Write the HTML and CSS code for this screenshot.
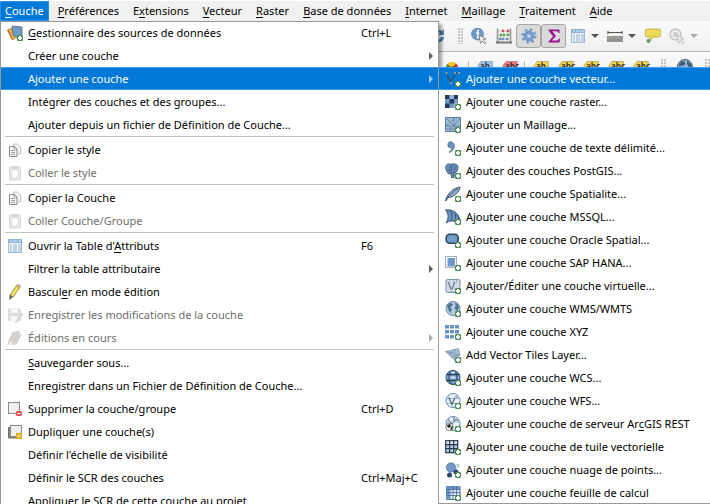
FILE: index.html
```html
<!DOCTYPE html>
<html lang="fr">
<head>
<meta charset="utf-8">
<title>Couche</title>
<link rel="stylesheet" href="styles.css">
</head>
<body>
<svg class="defs" aria-hidden="true">
  <symbol id="plus" viewBox="0 0 6 6"><rect width="6" height="6" rx="1.2" fill="#4f8f57"/><path d="M3 1v4M1 3h4" stroke="#fff" stroke-width="2"/></symbol>
  <symbol id="sources" viewBox="0 0 16 16"><path d="M0 5l7-3 3 9-5 4z" fill="#b5472f"/><path d="M1 5l8-3 2 9-5 4z" fill="#efb13c" stroke="#b0772a" stroke-width=".6"/><path d="M5 1l10 1v9l-5 2-4-3z" fill="#7099c8" stroke="#4d6c90" stroke-width=".8"/><use href="#plus" x="10" y="10" width="6" height="6"/></symbol>
  <symbol id="copy" viewBox="0 0 16 16"><path d="M6.500 2h4l3 3v7h-7z" fill="#f4f4f2" stroke="#b4b4b0" stroke-width=".8"/><path d="M2.500 4.500h5L10 7v7.500H2.500z" fill="#f4f4f2" stroke="#8c8c88" stroke-width="1"/><path d="M7 4.500V7h3M4 8.500h4M4 10.500h4M4 12.500h4" fill="none" stroke="#8c8c88" stroke-width=".8"/></symbol>
  <symbol id="paste" viewBox="0 0 16 16"><rect x="2.500" y="2" width="11" height="13" rx="1" fill="#e6e6e4" stroke="#d6d6d3"/><path d="M5 5h6v5l-2 3H5z" fill="#fff" stroke="#d8d8d5" stroke-width=".6"/><path d="M5.500 1h5v3h-5z" fill="#d3d3d0"/></symbol>
  <symbol id="table" viewBox="0 0 16 16"><rect x="1.500" y="1.500" width="13" height="13" fill="#f2f6fa" stroke="#9dbcdc"/><path d="M1 1h14v4H1z" fill="#8fb5dc"/><path d="M3 7h2M3 9h2M3 11h2M3 13h2M6 7h4M6 9h4M6 11h4M6 13h4M11 7h3M11 9h3M11 11h3M11 13h3" stroke="#8fb0d2" stroke-width="1"/><path d="M3 3h2M6 3h4M11 3h3" stroke="#d5e5f4"/></symbol>
  <symbol id="pencil" viewBox="0 0 16 16"><path d="M9.500 1.500l3.500 2L6 13l-3.500 2.500L3 11z" fill="#e5d14c" stroke="#8f8750" stroke-width=".8"/><path d="M3 10.500l3 2-3.500 3z" fill="#6a6a66"/><path d="M9.500 1l1.500-1 3 2-1 1.500z" fill="#c9c9c3" stroke="#8b8b85" stroke-width=".5"/><path d="M10 4l-5 7.500" stroke="#fff299"/></symbol>
  <symbol id="save" viewBox="0 0 16 16"><path d="M1 1.500h12l1 1V14H1z" fill="#dcdcda"/><path d="M4 2h7v4H4zM3.500 9h7v5h-7z" fill="#f8f8f8"/><path d="M15 6l-6 8-1 2 2-1 6-7z" fill="#e2e2e0" stroke="#cfcfcd" stroke-width=".6"/></symbol>
  <symbol id="edits" viewBox="0 0 16 16"><path d="M6 2l3 0-5 9-3 4 1-5zM10 1l3 1-5 10-3 3 0-4zM13 4l1 1-4 8-3 2 1-4z" fill="#d2cdcb" stroke="#d9d5d3"/></symbol>
  <symbol id="remove" viewBox="0 0 16 16"><rect x="1.500" y="1.500" width="11" height="11" fill="#eeeeec" stroke="#888a85"/><rect x="9" y="10" width="6" height="5" rx="1.500" fill="#ed4c56"/><path d="M10.500 12.500h3" stroke="#fff"/></symbol>
  <symbol id="dup" viewBox="0 0 16 16"><path d="M1.500 3.500h3v9h6v1.500h-9z" fill="#888a85" stroke="#6d6f6b"/><rect x="3.500" y="1.500" width="11" height="11" fill="#eeeeec" stroke="#888a85"/><path d="M9 9h6v6H9z" fill="#d1a91b"/><path d="M10.500 10.500h3v3h-3z" fill="#f3dc72"/></symbol>

  <symbol id="vector" viewBox="0 0 16 16"><path d="M1.500 2l4.500 10 4-10h4" fill="none" stroke="#3b4e5e" stroke-width="1.200"/><g fill="#b9c6cf" stroke="#4a5661" stroke-width=".4"><path d="M.5 1h2v2h-2zM9 1h2v2H9zM13 1h2v2h-2zM5 11h2v2H5z"/></g><use href="#plus" x="10" y="10" width="6" height="6"/></symbol>
  <symbol id="raster" viewBox="0 0 16 16"><path d="M0 1h13v13H0z" fill="#6f9aca"/><path d="M0 1h4.500v4H0zM9 1h4v4H9zM4.500 5H9v4.500H4.500zM0 9.500h4.500V14H0z" fill="#26395a"/><path d="M4.500 1H9v4H4.500z" fill="#91b3dc"/><path d="M9 9.500h4V14H9z" fill="#a7c2e2"/><use href="#plus" x="10" y="10" width="6" height="6"/></symbol>
  <symbol id="mesh" viewBox="0 0 16 16"><path d="M.5 .5h15v14H.5z" fill="#9dbbd9" stroke="#617d9a"/><path d="M.5 9h15M9 1v13M1 1l8 8 6-8M1 9l8-7M1 12h8M5 9v5" fill="none" stroke="#5f7b98" stroke-width=".8"/><use href="#plus" x="10" y="10" width="6" height="6"/></symbol>
  <symbol id="comma" viewBox="0 0 16 16"><path d="M3.500 7C1.500 3 5 .5 7.500 2.500 11 5 9.500 10.500 4 12.500c2.500-2 3.500-4 2.500-5-1 .5-2.300.5-3-.5z" fill="#6c94bf" stroke="#3d5a7b" stroke-width=".8"/><use href="#plus" x="10" y="10" width="6" height="6"/></symbol>
  <symbol id="postgis" viewBox="0 0 16 16"><path d="M1 3C2 0 5 1 6 1.500 8 .5 10 .7 12 2c2 1 .8 5-.5 7L9 10v4.500H6.500L6 10c-1.500 1-3 1.500-3.500-.5C1.500 8 .2 5 1 3z" fill="#6a91bd" stroke="#3f5d80"/><path d="M4.500 3.500C5.500 6 3 8 4.500 9M6 2c1 2 .5 5 0 8M9 3c2 1 1 4-1 4.500M9.500 8.500c-1 1-.5 3-.5 5" fill="none" stroke="#34516f" stroke-width=".8"/><use href="#plus" x="10" y="10" width="6" height="6"/></symbol>
  <symbol id="feather" viewBox="0 0 16 16"><path d="M.5 15C2 8 8 2 15 1c0 4-4 7-6 8.500-2 1.500-4 2-6 2z" fill="#90b0d1" stroke="#3f5265"/><path d="M1 14.500C4 9 8 6 13 2.500" fill="none" stroke="#31465c" stroke-width=".8"/><use href="#plus" x="10" y="10" width="6" height="6"/></symbol>
  <symbol id="mssql" viewBox="0 0 16 16"><path d="M.5 1C6 0 14 3 15.500 14l-5-1C8 11 5 12 1 14 4 9 3 5 .5 1z" fill="#6c93bd"/><path d="M.5 1C4 5 4 9 1 14M4.500 1c3 3 3 8 1 11M8.500 2.500c3 3 2 6 1.500 9.500M12 5c1.500 3 2 5 2 8M.5 1C8 0 14 4 15.500 13M1 14c3-2 6-3 9-1" fill="none" stroke="#3a587a" stroke-width="1"/><use href="#plus" x="10" y="10" width="6" height="6"/></symbol>
  <symbol id="oracle" viewBox="0 0 16 16"><rect x="1.200" y="2.200" width="12" height="9" rx="3.500" fill="#719bc9" stroke="#2d4262" stroke-width="1.600"/><use href="#plus" x="10" y="10" width="6" height="6"/></symbol>
  <symbol id="hana" viewBox="0 0 16 16"><path d="M2.500 3H10v8.500H2.500z" fill="#6f9aca"/><rect x=".5" y="1.500" width="11" height="11" fill="none" stroke="#4a5c70" stroke-dasharray="1 1"/><use href="#plus" x="10" y="10" width="6" height="6"/></symbol>
  <symbol id="virtual" viewBox="0 0 16 16"><rect x="1" y="1.500" width="14" height="13" rx="1.500" fill="#cfdce8" stroke="#7e93a7"/><path d="M3 3l3.500 9.500L10 3h3.500" fill="none" stroke="#5f7488" stroke-width="1.200"/><path d="M2 2h2v2H2zM9 2h2v2H9zM12 2h2v2h-2zM5.500 11h2v2h-2z" fill="#fff" stroke="#7d90a2" stroke-width=".4"/><use href="#plus" x="10" y="10" width="6" height="6"/></symbol>
  <symbol id="globe" viewBox="0 0 16 16"><circle cx="8" cy="7.500" r="7" fill="#b5cbe2" stroke="#6a86a4"/><path d="M2 4.500L5 2l3 1-1 2-2 1 2 2-1.500 4L3.500 9zM9.500 2l3 1L14 6l-1.500 4-2-1-1-3L11 5z" fill="#4f7299"/><use href="#plus" x="10" y="10" width="6" height="6"/></symbol>
  <symbol id="xyz" viewBox="0 0 16 16"><path d="M0 1h4v3.500H0zM5 1h4v3.500H5zM10 1h4v3.500h-4zM0 6h4v3.500H0zM5 6h4v3.500H5zM10 6h4v3.500h-4zM0 11h4v3.500H0zM5 11h4v3.500H5z" fill="#6794c8"/><use href="#plus" x="10" y="10" width="6" height="6"/></symbol>
  <symbol id="vtiles" viewBox="0 0 16 16"><path d="M.5 4.500L13.500 1.500l1.500 6-5 6z" fill="#a2bbd4" stroke="#8197ae" stroke-width=".7"/><path d="M4 8l7-6M.5 4.500L15 8M6 10l9-2.500" stroke="#7590ac" stroke-width=".7"/><use href="#plus" x="10" y="10" width="6" height="6"/></symbol>
  <symbol id="wcs" viewBox="0 0 16 16"><circle cx="8" cy="7.500" r="7" fill="#7ba5d2" stroke="#3a5674"/><path d="M1.500 4.500h13M1.500 10.500h13" stroke="#243c59" stroke-width="1.500"/><ellipse cx="8" cy="7.500" rx="4" ry="7" fill="none" stroke="#243c59"/><path d="M5.500 7.500h5M6 2.500h4" stroke="#cfe0f1" stroke-width="2"/><use href="#plus" x="10" y="10" width="6" height="6"/></symbol>
  <symbol id="wfs" viewBox="0 0 16 16"><circle cx="8" cy="7.500" r="7" fill="#e9f1f8" stroke="#6288b2"/><path d="M1 5.500h14M2 10.500h12" stroke="#8daccd" stroke-width=".8"/><path d="M3.500 4L7 11.500 10 4h3.500" fill="none" stroke="#4c5d6d" stroke-width="1.200"/><path d="M2.500 3h2v2h-2zM9 3h2v2H9zM12.500 3h2v2h-2z" fill="#b8c8d7"/><use href="#plus" x="10" y="10" width="6" height="6"/></symbol>
  <symbol id="arcgis" viewBox="0 0 16 16"><circle cx="8" cy="7.500" r="7" fill="#e9f1f8" stroke="#6288b2"/><path d="M3 3l4 5 3-4h4M9 1v4" fill="none" stroke="#4c5d6d"/><path d="M2 6h12" stroke="#8daccd" stroke-width=".8"/><circle cx="4.500" cy="11" r="3.800" fill="#f5f5f5" stroke="#666" stroke-width=".8"/><path d="M2 9l3-1 1 2-2 2-1.500-1zM6 11l2-1-1 3.500H5z" fill="#222"/><use href="#plus" x="10" y="10" width="6" height="6"/></symbol>
  <symbol id="vgrid" viewBox="0 0 16 16"><rect x=".7" y="1.700" width="12" height="12" fill="#b5cbe2" stroke="#26364c" stroke-width="1.200"/><path d="M1.500 2.500h10.500v3H1.500z" fill="#dfe7ef"/><path d="M4.700 1.500v12M8.700 1.500v12M.5 5.700h12M.5 9.700h12" stroke="#26364c" stroke-width="1.200"/><use href="#plus" x="10" y="10" width="6" height="6"/></symbol>
  <symbol id="cloud" viewBox="0 0 16 16"><circle cx="6" cy="5.500" r="4.600" fill="#6f9aca" stroke="#4b6d94" stroke-width=".8"/><circle cx="4.500" cy="13" r="2.500" fill="#2b456a"/><circle cx="11" cy="10" r="2.500" fill="#2b456a"/><circle cx="13" cy="3.500" r="1.300" fill="#fff" stroke="#7b8896" stroke-width=".7"/><circle cx="11" cy="6.500" r=".8" fill="#9faab5"/><use href="#plus" x="10" y="10" width="6" height="6"/></symbol>
  <symbol id="sheet" viewBox="0 0 16 16"><rect x="1.500" y="1.500" width="13.500" height="13" fill="#dce8f4" stroke="#466a92"/><path d="M1 1h14v3.500H1zM1 1h3.500v14H1z" fill="#6792c3"/><path d="M5 4.500v10M8 1v13.500M11.500 1v13.500M1 4.500h14M1 7.500h14M1 10.500h14" stroke="#466a92" stroke-width=".8"/><use href="#plus" x="10" y="10" width="6" height="6"/></symbol>

  <symbol id="refresh" viewBox="0 0 16 16"><path d="M2 7a6 6 0 0 1 10-4l2-2v6H8l2-2a3 3 0 0 0-5 2zM14 9a6 6 0 0 1-10 4l-2 2V9h6l-2 2a3 3 0 0 0 5-2z" fill="#4d7fb5"/></symbol>
  <symbol id="identify" viewBox="0 0 16 16"><circle cx="6.500" cy="6" r="6" fill="#6e98c6" stroke="#4f77a3" stroke-width=".6"/><circle cx="7" cy="2.800" r="1.100" fill="#fff"/><path d="M5 5h2.500L6.500 9.500H8" fill="none" stroke="#fff" stroke-width="1.500"/><path d="M8 7l7 4-3 .7 3 3-1 1.300-3-3-1.500 2.500z" fill="#f3f3f1" stroke="#72726e" stroke-width=".8"/></symbol>
  <symbol id="abacus" viewBox="0 0 16 16"><path d="M1.500.5v15M14.500.5v15" stroke="#8e908c" stroke-width="1.500"/><path d="M1 3h14M1 7h14M1 11h14" stroke="#b4b6b1" stroke-width=".7"/><path d="M0 14.500h16" stroke="#777974" stroke-width="2"/><g fill="#cf4b54"><circle cx="7" cy="3" r="1.400"/><circle cx="12" cy="3" r="1.400"/></g><g fill="#57a75b"><circle cx="5" cy="7" r="1.400"/><circle cx="8" cy="7" r="1.400"/><circle cx="12" cy="7" r="1.400"/></g><g fill="#6f90b8"><circle cx="4" cy="11" r="1.400"/><circle cx="7" cy="11" r="1.400"/><circle cx="11" cy="11" r="1.400"/></g></symbol>
  <symbol id="gear" viewBox="0 0 16 16"><circle cx="8" cy="8" r="6.300" fill="none" stroke="#6f9aca" stroke-width="2.600" stroke-dasharray="2.400 2.548"/><circle cx="8" cy="8" r="3.800" fill="#e6edf5" stroke="#6f9aca" stroke-width="3"/><circle cx="8" cy="8" r="1.600" fill="#d7e3f0" stroke="#5c84b0" stroke-width=".6"/></symbol>
  <symbol id="sigma" viewBox="0 0 16 16"><path d="M2.500 1.500h11v3.500h-1.200c-.2-1.400-.8-1.800-2.300-1.800H6.300L10 8l-4.200 4.600H10c1.800 0 2.500-.6 2.900-2H14l-.5 4h-11v-1L7 8.500 2.500 2.500z" fill="#981593"/></symbol>
  <symbol id="measure" viewBox="0 0 16 16"><path d="M.5 4.500h15M1 3v3M15 3v3" stroke="#555753" stroke-width="1.200"/><path d="M0 8.500h16v5H0z" fill="#9b9d99" stroke="#747671" stroke-width=".6"/><path d="M3 11v2M6 11v2M9 11v2M12 11v2" stroke="#666" stroke-width=".6"/></symbol>
  <symbol id="tip" viewBox="0 0 16 16"><path d="M3 1h10q3 0 3 3v2q0 3-3 3H8l-3 4V9H3Q0 9 0 6V4q0-3 3-3z" fill="#f0db59" stroke="#b2a13c" stroke-width=".8"/><circle cx="3.500" cy="13" r="2" fill="#6a9a6a"/></symbol>
  <symbol id="zoomg" viewBox="0 0 16 16"><circle cx="6.500" cy="6.500" r="5.500" fill="#ededed" stroke="#c6c6c6" stroke-width="1.500"/><circle cx="6.500" cy="6.500" r="2.500" fill="#ccc"/><path d="M8 7l7 4-3 .7 3 3-1 1.300-3-3-1.500 2.500z" fill="#e6e6e6" stroke="#bdbdbd" stroke-width=".8"/></symbol>
  <symbol id="caret" viewBox="0 0 8 4"><path d="M0 0h8L4 4z" fill="currentColor"/></symbol>
  <symbol id="right" viewBox="0 0 4 8"><path d="M0 0v8l4-4z" fill="currentColor"/></symbol>
  <symbol id="pie" viewBox="0 0 12 12"><circle cx="6" cy="6" r="6" fill="#ce2424"/><path d="M6 6L1 2.500A6 6 0 0 0 2 10.500z" fill="#279547"/><path d="M6 6L1.500 2A6 6 0 0 1 10 1.500z" fill="#f2cd26"/><circle cx="6" cy="7" r="2.500" fill="#222"/></symbol>
  <symbol id="tag" viewBox="0 0 16 14"><path d="M4 1.500h11.300v9H4L.7 6z" fill="currentColor" stroke="#000" stroke-opacity=".3" stroke-width=".8"/></symbol>
  <symbol id="world" viewBox="0 0 16 16"><circle cx="8" cy="8" r="7.500" fill="#94b2d1" stroke="#405569"/><path d="M2 5l3-3 3 1v2L6 7 4 6 3 9zM10 2l4 3 1 4-3-1-2-3z" fill="#3e566e"/></symbol>
</svg>

<nav class="menubar" role="menubar">
  <button class="open"><u>C</u>ouche</button>
  <button><u>P</u>références</button>
  <button>E<u>x</u>tensions</button>
  <button><u>V</u>ecteur</button>
  <button><u>R</u>aster</button>
  <button><u>B</u>ase de données</button>
  <button><u>I</u>nternet</button>
  <button><u>M</u>aillage</button>
  <button><u>T</u>raitement</button>
  <button><u>A</u>ide</button>
</nav>

<div class="toolbar">
  <button class="tool refresh" aria-label="Actualiser"><svg><use href="#refresh"/></svg></button>
  <i class="grip"></i>
  <button class="tool" aria-label="Identifier"><svg><use href="#identify"/></svg></button>
  <button class="tool" aria-label="Calculatrice"><svg><use href="#abacus"/></svg></button>
  <button class="tool on" aria-label="Traitements"><svg><use href="#gear"/></svg></button>
  <button class="tool on" aria-label="Statistiques"><svg><use href="#sigma"/></svg></button>
  <button class="tool drop" aria-label="Table"><svg><use href="#table"/></svg><svg class="caret"><use href="#caret"/></svg></button>
  <button class="tool drop" aria-label="Mesurer"><svg><use href="#measure"/></svg><svg class="caret"><use href="#caret"/></svg></button>
  <button class="tool" aria-label="Infobulles"><svg><use href="#tip"/></svg></button>
  <button class="tool drop dim" aria-label="Action"><svg><use href="#zoomg"/></svg><svg class="caret"><use href="#caret"/></svg></button>
</div>
<div class="toolbar second">
  <button class="tool pie" aria-label="Diagrammes"><svg><use href="#pie"/></svg></button>
  <i class="rule"></i>
  <button class="tool tag blue"><svg><use href="#tag"/></svg><span>ab</span></button>
  <button class="tool tag red"><svg><use href="#tag"/></svg><span>abc</span></button>
  <i class="rule"></i>
  <button class="tool tag"><svg><use href="#tag"/></svg><span>ab</span></button>
  <button class="tool tag"><svg><use href="#tag"/></svg><span>abc</span></button>
  <button class="tool tag"><svg><use href="#tag"/></svg><span>abc</span></button>
  <button class="tool tag"><svg><use href="#tag"/></svg><span>abc</span></button>
  <button class="tool tag"><svg><use href="#tag"/></svg><span>abc</span></button>
  <i class="grip"></i>
  <button class="tool" aria-label="Catalogue"><svg><use href="#world"/></svg></button>
  <i class="grip"></i>
</div>

<div class="menu main" role="menu">
  <button class="item"><svg><use href="#sources"/></svg><span><u>G</u>estionnaire des sources de données</span><kbd>Ctrl+L</kbd></button>
  <button class="item"><span>Créer une couche</span><svg class="right"><use href="#right"/></svg></button>
  <button class="item active"><span>Ajouter une couche</span><svg class="right"><use href="#right"/></svg></button>
  <button class="item"><span>Intégrer des couches et des groupes...</span></button>
  <button class="item"><span>Ajouter depuis un fichier de Définition de Couche...</span></button>
  <hr>
  <button class="item"><svg><use href="#copy"/></svg><span>Copier le style</span></button>
  <button class="item" disabled><svg><use href="#paste"/></svg><span>Coller le style</span></button>
  <hr>
  <button class="item"><svg><use href="#copy"/></svg><span>Copier la Couche</span></button>
  <button class="item" disabled><svg><use href="#paste"/></svg><span>Coller Couche/Groupe</span></button>
  <hr>
  <button class="item"><svg><use href="#table"/></svg><span>Ouvrir la Table d'<u>A</u>ttributs</span><kbd>F6</kbd></button>
  <button class="item"><span>Filtrer la table attributaire</span><svg class="right"><use href="#right"/></svg></button>
  <button class="item"><svg><use href="#pencil"/></svg><span>Bascul<u>e</u>r en mode édition</span></button>
  <button class="item" disabled><svg><use href="#save"/></svg><span>Enregistrer les modifications de la couche</span></button>
  <button class="item" disabled><svg><use href="#edits"/></svg><span>Éditions en cours</span><svg class="right"><use href="#right"/></svg></button>
  <hr>
  <button class="item"><span><u>S</u>auvegarder sous...</span></button>
  <button class="item"><span>Enregistrer dans un Fichier de Définition de Couche...</span></button>
  <button class="item"><svg><use href="#remove"/></svg><span>Supprimer la couche/groupe</span><kbd>Ctrl+D</kbd></button>
  <button class="item"><svg><use href="#dup"/></svg><span>Dupliquer une couche(s)</span></button>
  <button class="item"><span>Définir l'échelle de visibilité</span></button>
  <button class="item"><span>Définir le SCR des couches</span><kbd>Ctrl+Maj+C</kbd></button>
  <button class="item"><span>Appliquer le SCR de cette couche au projet</span></button>
</div>

<div class="menu sub" role="menu">
  <button class="item active"><svg><use href="#vector"/></svg><span>Ajouter une couche vecteur...</span></button>
  <button class="item"><svg><use href="#raster"/></svg><span>Ajouter une couche raster...</span></button>
  <button class="item"><svg><use href="#mesh"/></svg><span>Ajouter un Maillage...</span></button>
  <button class="item"><svg><use href="#comma"/></svg><span>Ajouter une couche de texte délimité...</span></button>
  <button class="item"><svg><use href="#postgis"/></svg><span>Ajouter des couches PostGIS...</span></button>
  <button class="item"><svg><use href="#feather"/></svg><span>Ajouter une couche Spatialite...</span></button>
  <button class="item"><svg><use href="#mssql"/></svg><span>Ajouter une couche MSSQL...</span></button>
  <button class="item"><svg><use href="#oracle"/></svg><span>Ajouter une couche Oracle Spatial...</span></button>
  <button class="item"><svg><use href="#hana"/></svg><span>Ajouter une couche SAP HANA...</span></button>
  <button class="item"><svg><use href="#virtual"/></svg><span>Ajouter/Éditer une couche virtuelle...</span></button>
  <button class="item"><svg><use href="#globe"/></svg><span>Ajouter une couche WMS/WMTS</span></button>
  <button class="item"><svg><use href="#xyz"/></svg><span>Ajouter une couche XYZ</span></button>
  <button class="item"><svg><use href="#vtiles"/></svg><span>Add Vector Tiles Layer...</span></button>
  <button class="item"><svg><use href="#wcs"/></svg><span>Ajouter une couche WCS...</span></button>
  <button class="item"><svg><use href="#wfs"/></svg><span>Ajouter une couche WFS...</span></button>
  <button class="item"><svg><use href="#arcgis"/></svg><span>Ajouter une couche de serveur Ar<u>c</u>GIS REST</span></button>
  <button class="item"><svg><use href="#vgrid"/></svg><span>Ajouter une couche de tuile vectorielle</span></button>
  <button class="item"><svg><use href="#cloud"/></svg><span>Ajouter une couche nuage de points...</span></button>
  <button class="item"><svg><use href="#sheet"/></svg><span>Ajouter une couche feuille de calcul</span></button>
</div>
</body>
</html>
```
FILE: styles.css
```css
* { box-sizing: border-box; }
body {
  margin: 0;
  padding-top: 1px;
  height: 100vh;
  overflow: hidden;
  position: relative;
  background: #fff;
  color: #000;
  font: 11px/16px "Noto Sans", "Open Sans", sans-serif;
}
button {
  font: inherit;
  color: inherit;
  background: none;
  border: 0;
  padding: 0;
  margin: 0;
}
u { text-underline-offset: 2px; text-decoration-skip-ink: none; }
.defs { display: none; }

.menubar { display: flex; height: 20px; background: #f0f0f0; gap: 4px; }
.menubar button { padding: 0 5px; white-space: nowrap; }
.menubar .open { background: #0078d7; color: #fff; box-shadow: inset 0 0 0 1px #2a8fe6; }

.toolbar {
  display: flex;
  align-items: center;
  height: 31px;
  padding-left: 430px;
  background: linear-gradient(#fafafa, #efefef);
  border-bottom: 1px solid #b4b4b4;
}
.tool {
  display: flex;
  align-items: center;
  justify-content: center;
  flex: none;
  width: 25px;
  height: 24px;
}
.tool svg { width: 16px; height: 16px; }
.tool.refresh { width: 16px; }
.tool.on { background: #dadada; border: 1px solid #a5a5a5; border-radius: 3px; }
.tool.drop { width: 37px; gap: 5px; color: #555; }
.tool .caret { width: 8px; height: 4px; }
.tool.dim { color: #aaa; }
.grip {
  flex: none;
  width: 5px;
  height: 16px;
  margin: 0 3px 0 12px;
  background: radial-gradient(circle at 1px 1px, #c4c4c4 1px, transparent 1px) 0 0 / 3px 3px;
}
.second { align-items: flex-start; padding-top: 7px; }
.second .tool { height: 16px; }
.second .grip { margin: 0 6px 0 8px; }
.rule { flex: none; width: 1px; height: 24px; margin: 2px 3px 2px 2px; background: #bbb; }
.tool.pie { width: 36px; padding: 1px 0 0 8px; }
.tool.pie svg { width: 12px; height: 12px; }
.tool.tag { position: relative; color: #f2d648; }
.tool.tag span { position: absolute; left: 8px; top: 1px; font: bold 8px/12px "Open Sans", sans-serif; color: #333; }
.tool.blue { color: #9cc4ef; }
.tool.red { color: #f37a7a; }

.menu {
  position: absolute;
  background: #fff;
  border: 0 solid #979797;
  border-width: 0 1px;
}
.main { left: 0; top: 21px; width: 439px; box-shadow: inset 0 1px #979797, 3px 3px 3px rgba(0, 0, 0, .35); }
.sub { left: 438px; right: -2px; top: 67px; box-shadow: inset 0 -1px #979797; }
.item {
  display: grid;
  grid-template-columns: 16px 1fr 72px;
  align-items: center;
  column-gap: 5px;
  width: 100%;
  height: 23px;
  padding: 0 5px 0 6px;
  text-align: left;
  white-space: nowrap;
}
.item svg { width: 16px; height: 16px; grid-column: 1; grid-row: 1; }
.item span { grid-column: 2; grid-row: 1; }
.item kbd { font: inherit; grid-column: 3; grid-row: 1; }
.item .right { width: 4px; height: 8px; grid-column: 3; justify-self: end; color: #5c5c5c; }
.item.active { background: #0078d7; color: #fff; box-shadow: inset 0 1px #3a9df0, inset 0 -1px #3a9df0; }
.item.active .right { color: #9ccbf2; }
.item:disabled { color: #6d6d6d; }
.item:disabled .right { color: #aaa; }
.sub .item { grid-template-columns: 16px 1fr; }
.menu hr { height: 2px; margin: 0 4px; border: 0; border-top: 1px solid #c0c0c0; }
```
